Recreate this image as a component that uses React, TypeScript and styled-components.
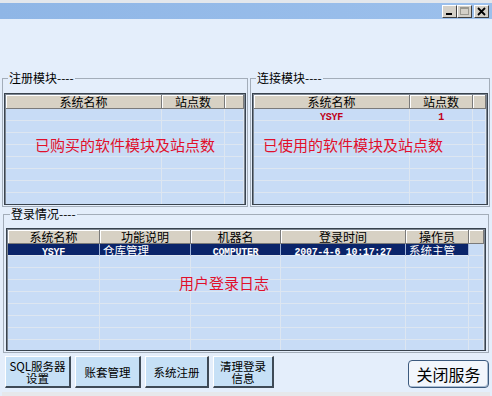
import React from "react";
import styled, { createGlobalStyle } from "styled-components";

const GlobalStyle = createGlobalStyle`
  body {
    margin: 0;
    font-family: "Noto Sans CJK SC", "Liberation Sans", sans-serif;
  }
`;

const Window = styled.div`
  width: 492px;
  height: 396px;
  display: flex;
  flex-direction: column;
  background: #e4eefb;
  overflow: hidden;
`;

const TopStrip = styled.div`
  height: 3px;
  background: #e3e7ec;
`;

const TitleBar = styled.div`
  height: 16px;
  display: flex;
  justify-content: flex-end;
  align-items: flex-start;
  padding: 2px 3px 0 0;
  box-sizing: border-box;
  background: linear-gradient(to right, #8fb6e6, #9cc0ec);
`;

const Controls = styled.div`
  display: flex;
`;

const ControlButton = styled.div<{ $gap?: number }>`
  width: 15px;
  height: 13px;
  margin-left: ${(p) => p.$gap ?? 0}px;
  box-sizing: border-box;
  background: #d4d0c8;
  border-top: 1px solid #ffffff;
  border-left: 1px solid #ffffff;
  border-right: 1px solid #404040;
  border-bottom: 1px solid #404040;
  display: flex;
  align-items: center;
  justify-content: center;
`;

const Body = styled.div`
  flex: 1;
  display: flex;
  flex-direction: column;
  padding: 52px 2px 0 2px;
`;

const TopRow = styled.div`
  display: flex;
  gap: 2px;
`;

const GroupBox = styled.fieldset<{ $w?: number; $pt: number }>`
  margin: 0;
  ${(p) => (p.$w ? `width: ${p.$w}px; flex: none;` : "")}
  box-sizing: border-box;
  padding: ${(p) => p.$pt}px 1px 1px 1px;
  border: 1px solid #a3adb9;
  min-width: 0;
`;

const BottomGroup = styled(GroupBox)`
  margin: 0 1px;
  padding-left: 2px;
  padding-right: 2px;
`;

const Legend = styled.legend`
  font-size: 12px;
  line-height: 14px;
  height: 14px;
  padding: 0 1px;
  margin-left: 4px;
  color: #000;
`;

const GridFrame = styled.div<{ $h: number }>`
  position: relative;
  height: ${(p) => p.$h}px;
  box-sizing: border-box;
  border: 1px solid #39434e;
  box-shadow: inset 0 0 0 1px #7c8692;
  padding: 1px;
  overflow: hidden;
  background: #c8dcf6;
`;

const Row = styled.div<{ $header?: boolean }>`
  display: flex;
  height: ${(p) => (p.$header ? 14 : 12)}px;
`;

const Cell = styled.div<{
  $w?: number;
  $header?: boolean;
  $selected?: boolean;
  $align?: "left" | "center";
}>`
  ${(p) => (p.$w ? `width: ${p.$w}px; flex: none;` : "flex: 1;")}
  box-sizing: border-box;
  overflow-x: clip;
  white-space: nowrap;
  font-size: ${(p) => (p.$header ? 12 : 11.5)}px;
  line-height: ${(p) => (p.$header ? 13 : 12)}px;
  text-align: ${(p) => p.$align ?? "center"};
  padding-left: ${(p) => (p.$align === "left" ? 3 : 0)}px;
  ${(p) =>
    p.$header
      ? `
    background: #d7d1c4;
    color: #000;
    border-right: 1px solid #7a7a7a;
    border-bottom: 1px solid #7a7a7a;
    box-shadow: inset 1px 1px 0 #ffffff;
  `
      : p.$selected
      ? `
    background: #0a246a;
    color: #ffffff;
    border-right: 1px solid #9fb3d8;
    border-bottom: 1px solid #dde6f1;
  `
      : `
    background: #c8dcf6;
    color: #c00018;
    border-right: 1px solid #dde6f1;
    border-bottom: 1px solid #dde6f1;
  `}
`;

const Mono = styled.span`
  font-family: "Liberation Mono", monospace;
  font-size: 10px;
  font-weight: bold;
  letter-spacing: -0.3px;
`;

const Watermark = styled.div<{ $left: number; $top: number }>`
  position: absolute;
  left: ${(p) => p.$left}px;
  top: ${(p) => p.$top}px;
  font-size: 15px;
  line-height: 16px;
  color: #e0102c;
  white-space: nowrap;
  pointer-events: none;
`;

const ButtonRow = styled.div`
  display: flex;
  align-items: flex-end;
  gap: 4px;
  margin-top: 3px;
  padding: 0 1px 0 3px;
`;

const ActionButton = styled.button<{ $w: number }>`
  width: ${(p) => p.$w}px;
  height: 32px;
  box-sizing: border-box;
  padding: 0;
  margin: 0;
  background: #c6e0f6;
  border-top: 1px solid #ffffff;
  border-left: 1px solid #ffffff;
  border-right: 2px solid #3e4a56;
  border-bottom: 2px solid #3e4a56;
  font-family: "Noto Sans CJK SC", sans-serif;
  font-size: 11.5px;
  line-height: 12px;
  color: #000;
  display: flex;
  flex-direction: column;
  align-items: center;
  justify-content: center;
`;

const ButtonLine = styled.span`
  display: block;
  height: 12px;
  line-height: 12px;
`;

const CloseButton = styled.button`
  margin-left: auto;
  width: 81px;
  height: 28px;
  box-sizing: border-box;
  padding: 0;
  background: #f2f6fc;
  border: 1px solid #3c5a7e;
  border-radius: 4px;
  box-shadow: inset -1px -1px 0 #a9bbd0;
  font-family: "Noto Sans CJK SC", sans-serif;
  font-size: 16px;
  color: #000;
`;

const BottomStrip = styled.div`
  height: 4px;
  margin-top: auto;
  background: #e6e8eb;
`;

type Col = { w?: number; title: string };

const moduleCols: Col[] = [
  { w: 156, title: "系统名称" },
  { w: 63, title: "站点数" },
  { title: "" },
];

const logCols: Col[] = [
  { w: 92, title: "系统名称" },
  { w: 91, title: "功能说明" },
  { w: 90, title: "机器名" },
  { w: 125, title: "登录时间" },
  { w: 63, title: "操作员" },
  { title: "" },
];

type CellData = { text?: React.ReactNode; align?: "left" | "center" };

function DataGrid({
  cols,
  height,
  rows,
  data = [],
  selectedRow,
  children,
}: {
  cols: Col[];
  height: number;
  rows: number;
  data?: CellData[][];
  selectedRow?: number;
  children?: React.ReactNode;
}) {
  return (
    <GridFrame $h={height}>
      <Row $header>
        {cols.map((c, i) => (
          <Cell key={i} $w={c.w} $header>
            {c.title}
          </Cell>
        ))}
      </Row>
      {Array.from({ length: rows }).map((_, r) => (
        <Row key={r}>
          {cols.map((c, i) => {
            const d = data[r]?.[i];
            const isFiller = !c.w;
            return (
              <Cell
                key={i}
                $w={c.w}
                $align={d?.align}
                $selected={selectedRow === r && !isFiller}
              >
                {d?.text}
              </Cell>
            );
          })}
        </Row>
      ))}
      {children}
    </GridFrame>
  );
}

export default function App() {
  return (
    <>
      <GlobalStyle />
      <Window>
        <TopStrip />
        <TitleBar>
          <Controls>
            <ControlButton>
              <svg width="9" height="9" viewBox="0 0 9 9">
                <rect x="1" y="6" width="6" height="2" fill="#000" />
              </svg>
            </ControlButton>
            <ControlButton>
              <svg width="9" height="9" viewBox="0 0 9 9">
                <rect x="0.5" y="0.5" width="8" height="7" fill="none" stroke="#9a9890" />
                <rect x="0.5" y="0.5" width="8" height="1.5" fill="#9a9890" />
              </svg>
            </ControlButton>
            <ControlButton $gap={2}>
              <svg width="9" height="9" viewBox="0 0 9 9">
                <path d="M1 1 L8 8 M8 1 L1 8" stroke="#000" strokeWidth="1.8" />
              </svg>
            </ControlButton>
          </Controls>
        </TitleBar>
        <Body>
          <TopRow>
            <GroupBox $w={246} $pt={8}>
              <Legend>注册模块----</Legend>
              <DataGrid cols={moduleCols} height={112} rows={8}>
                <Watermark $left={30} $top={43}>
                  已购买的软件模块及站点数
                </Watermark>
              </DataGrid>
            </GroupBox>
            <GroupBox $w={240} $pt={8}>
              <Legend>连接模块----</Legend>
              <DataGrid
                cols={moduleCols}
                height={112}
                rows={8}
                data={[[{ text: <Mono>YSYF</Mono> }, { text: <Mono>1</Mono> }]]}
              >
                <Watermark $left={10} $top={43}>
                  已使用的软件模块及站点数
                </Watermark>
              </DataGrid>
            </GroupBox>
          </TopRow>
          <BottomGroup $pt={7}>
            <Legend>登录情况----</Legend>
            <DataGrid
              cols={logCols}
              height={123}
              rows={9}
              selectedRow={0}
              data={[
                [
                  { text: <Mono>YSYF</Mono> },
                  { text: "仓库管理", align: "left" },
                  { text: <Mono>COMPUTER</Mono> },
                  { text: <Mono>2007-4-6 10:17:27</Mono> },
                  { text: "系统主管", align: "left" },
                ],
              ]}
            >
              <Watermark $left={172} $top={46}>
                用户登录日志
              </Watermark>
            </DataGrid>
          </BottomGroup>
          <ButtonRow>
            <ActionButton $w={66}>
              <ButtonLine>SQL服务器</ButtonLine>
              <ButtonLine>设置</ButtonLine>
            </ActionButton>
            <ActionButton $w={66}>账套管理</ActionButton>
            <ActionButton $w={64}>系统注册</ActionButton>
            <ActionButton $w={61}>
              <ButtonLine>清理登录</ButtonLine>
              <ButtonLine>信息</ButtonLine>
            </ActionButton>
            <CloseButton>关闭服务</CloseButton>
          </ButtonRow>
          <BottomStrip />
        </Body>
      </Window>
    </>
  );
}
